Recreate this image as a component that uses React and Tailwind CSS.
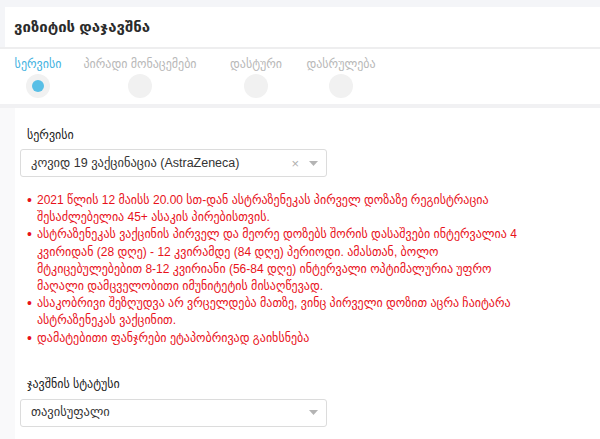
import React from "react";

const font = { fontFamily: '"Liberation Sans", "DejaVu Sans", sans-serif' };

function Caret() {
  return (
    <svg width="9" height="5" viewBox="0 0 9 5" className="block">
      <path d="M0 0h9L4.5 5z" fill="#b4b4b4" />
    </svg>
  );
}

function Step({ label, active, className }) {
  return (
    <div className={`flex flex-col items-center ${className}`}>
      <div className={`text-[12px] leading-[14px] whitespace-nowrap ${active ? "text-[#43b2df]" : "text-[#b8b8b8]"}`}>
        {label}
      </div>
      <div className="mt-[3px] w-[24px] h-[24px] rounded-full bg-[#f1f1f1] flex items-center justify-center">
        {active && <div className="w-[12px] h-[12px] rounded-full bg-[#59bfe6]" />}
      </div>
    </div>
  );
}

const notes = [
  [
    "2021 წლის 12 მაისს 20.00 სთ-დან ასტრაზენეკას პირველ დოზაზე რეგისტრაცია",
    "შესაძლებელია 45+ ასაკის პირებისთვის.",
  ],
  [
    "ასტრაზენეკას ვაქცინის პირველ და მეორე დოზებს შორის დასაშვები ინტერვალია 4",
    "კვირიდან (28 დღე) - 12 კვირამდე (84 დღე) პერიოდი. ამასთან, ბოლო",
    "მტკიცებულებებით 8-12 კვირიანი (56-84 დღე) ინტერვალი ოპტიმალურია უფრო",
    "მაღალი დამცველობითი იმუნიტეტის მისაღწევად.",
  ],
  [
    "ასაკობრივი შეზღუდვა არ ვრცელდება მათზე, ვინც პირველი დოზით აცრა ჩაიტარა",
    "ასტრაზენეკას ვაქცინით.",
  ],
  ["დამატებითი ფანჯრები ეტაპობრივად გაიხსნება"],
];

export default function App() {
  return (
    <div className="w-[600px] h-[439px] overflow-hidden bg-[#f4f5f8]" style={font}>
      <div className="pt-[7px]">
        <div className="ml-[5px] h-[40px] bg-white flex items-center pl-[9px]">
          <span className="text-[15px] font-bold text-[#2b2b2b]">ვიზიტის დაჯავშნა</span>
        </div>
        <div className="h-[2px] bg-[#eeeeef]" />
        <div className="h-[55px] bg-white flex items-start pt-[8px]">
          <Step label="სერვისი" active className="ml-[12px] w-[52px]" />
          <Step label="პირადი მონაცემები" className="ml-[16px] w-[120px]" />
          <Step label="დასტური" className="ml-[26px] w-[60px]" />
          <Step label="დასრულება" className="ml-[18px] w-[74px]" />
        </div>
      </div>
      <div className="h-[4px] bg-[#f1f1f3]" />
      <div className="flex h-full">
        <div className="w-[15px] bg-[#f9f9fa]" />
        <div className="flex-1 bg-white pl-[5px] pt-[20px]">
          <div className="pl-[7px] text-[12px] leading-[14px] text-[#222]">სერვისი</div>
          <div className="mt-[7px] w-[307px] h-[28px] border border-[#dcdcdc] rounded-[3px] flex items-center pl-[10px] pr-[8px]">
            <span className="flex-1 text-[12.5px] text-[#333] whitespace-nowrap">კოვიდ 19 ვაქცინაცია (AstraZeneca)</span>
            <span className="text-[13px] text-[#b0b0b0] mr-[10px] leading-none">×</span>
            <Caret />
          </div>
          <ul className="mt-[15px] pl-[7px] text-[12px] leading-[17.2px] text-[#e8121b]">
            {notes.map((lines, i) => (
              <li key={i} className="flex">
                <span className="w-[10px] shrink-0 text-[14px]">•</span>
                <div>
                  {lines.map((l, j) => (
                    <div key={j} className="whitespace-nowrap">{l}</div>
                  ))}
                </div>
              </li>
            ))}
          </ul>
          <div className="mt-[30px] pl-[7px] text-[12px] leading-[14px] text-[#222]">ჯავშნის სტატუსი</div>
          <div className="mt-[8px] w-[307px] h-[28px] border border-[#dcdcdc] rounded-[3px] flex items-center pl-[10px] pr-[8px]">
            <span className="flex-1 text-[12.5px] text-[#333]">თავისუფალი</span>
            <Caret />
          </div>
        </div>
      </div>
    </div>
  );
}
